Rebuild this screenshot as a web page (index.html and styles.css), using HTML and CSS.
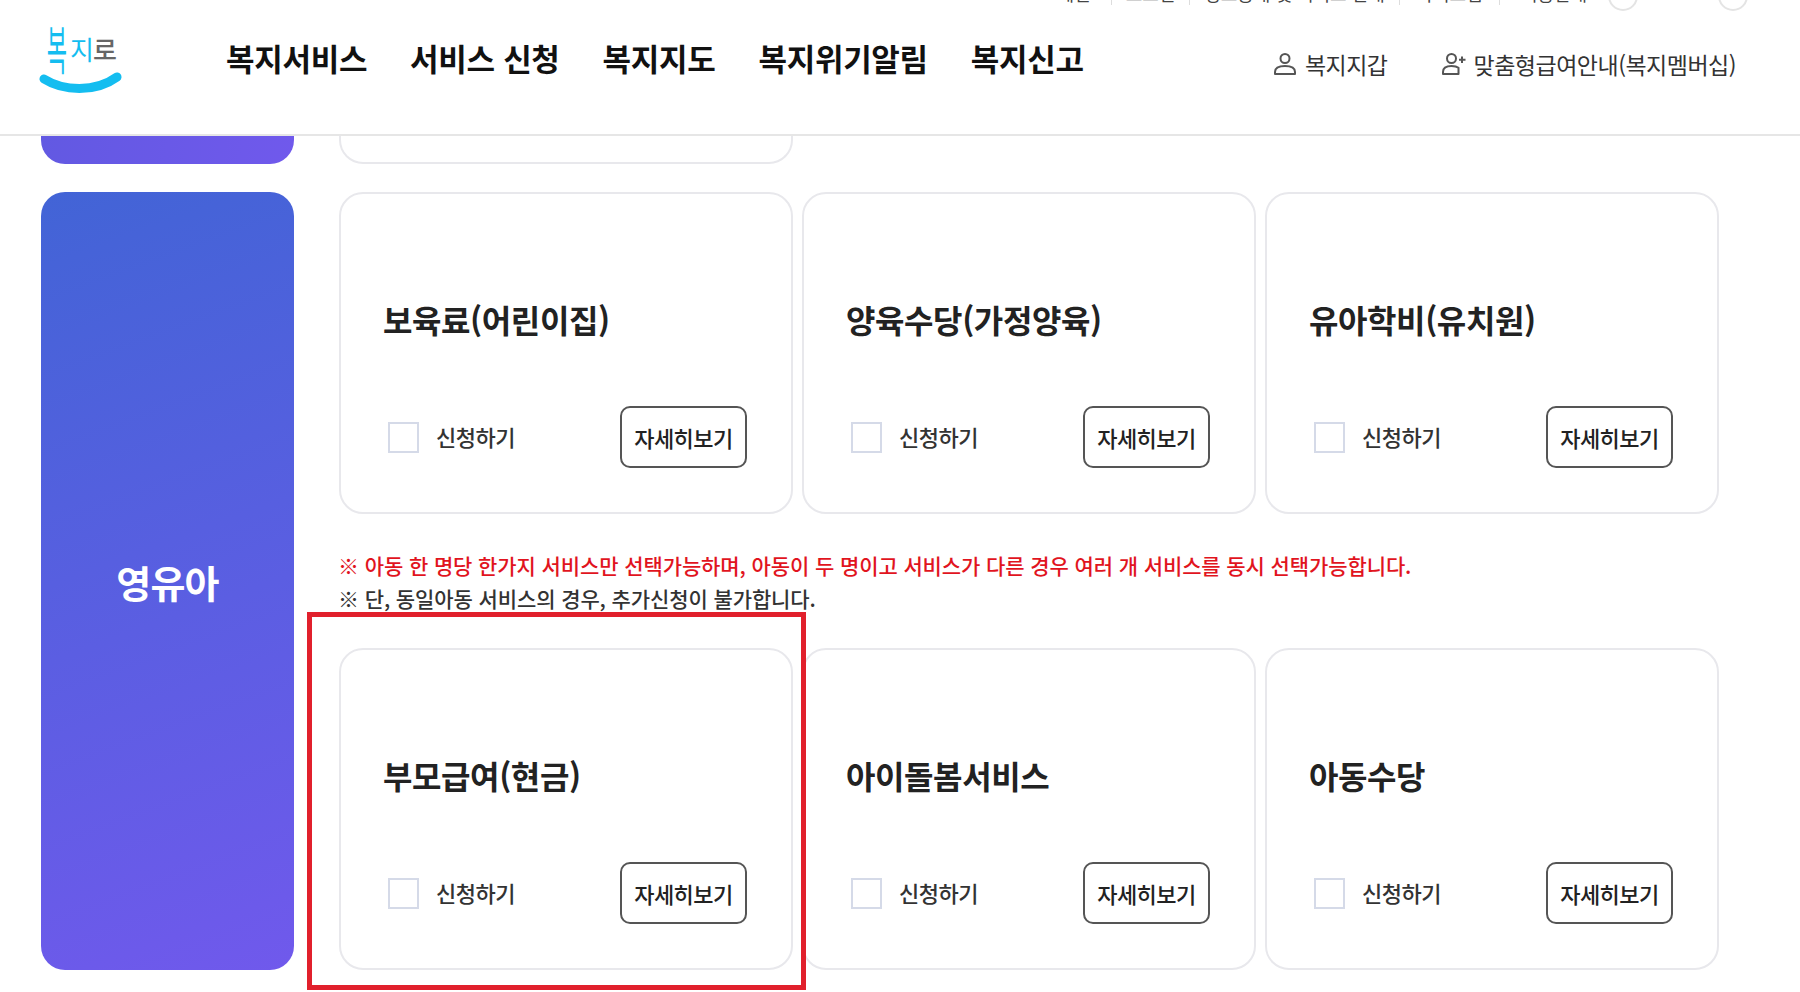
FILE: index.html
```html
<!DOCTYPE html>
<html lang="ko">

<head>
	<meta charset="utf-8">
	<title>복지로 - 서비스 신청</title>
	<link rel="stylesheet" href="styles.css">
</head>

<body>
	<header class="site_header">
		<div class="util_bar">
			<span class="util_item item_a">메인</span>
			<span class="util_item item_b">로그인</span>
			<span class="util_item item_c">정보공개 및 서비스 안내</span>
			<span class="util_item item_d">사이트맵</span>
			<span class="util_item item_e">이용안내</span>
			<span class="util_circle"></span>
			<span class="util_circle"></span>
		</div>
		<div class="main_bar">
			<a class="logo" href="#">
				<span class="logo_text"><span class="logo_bok">복</span><span class="logo_ji">지</span><span class="logo_ro">로</span></span>
				<svg class="logo_smile" viewBox="0 0 84 26" width="84" height="26">
					<path d="M5 8 C 24 20, 56 22, 78 6" fill="none" stroke="#14bdf0" stroke-width="9" stroke-linecap="round" />
				</svg>
			</a>
			<nav class="gnb">
				<a href="#">복지서비스</a>
				<a href="#">서비스 신청</a>
				<a href="#">복지지도</a>
				<a href="#">복지위기알림</a>
				<a href="#">복지신고</a>
			</nav>
			<div class="my_links">
				<a href="#">
					<svg class="my_icon" viewBox="0 0 24 24" width="24" height="24">
						<circle cx="12" cy="6.5" r="4.5" />
						<path d="M2 22 V20 C2 15.5 6 14 12 14 C18 14 22 15.5 22 20 V22 Z" />
					</svg>
					복지지갑
				</a>
				<a href="#">
					<svg class="my_icon" viewBox="0 0 24 24" width="24" height="24">
						<circle cx="9.5" cy="6.5" r="4.5" />
						<path d="M1 22 V20 C1 15.5 4.5 14 9.5 14 C12.5 14 15 14.6 16.5 15.8 V22 Z" />
						<path d="M20 4.5 V11 M17 7.8 H23.5" />
					</svg>
					맞춤형급여안내(복지멤버십)
				</a>
			</div>
		</div>
	</header>

	<main>
		<!-- previous group, scrolled under the header -->
		<section class="group group_prev">
			<div class="group_label"></div>
			<div class="card_row">
				<div class="card"></div>
			</div>
		</section>

		<section class="group">
			<div class="group_label">영유아</div>
			<div class="group_body">
				<div class="card_row">
					<div class="card">
						<h3>보육료(어린이집)</h3>
						<div class="card_foot">
							<label class="check"><span class="check_box"></span>신청하기</label>
							<a class="more_btn" href="#">자세히보기</a>
						</div>
					</div>
					<div class="card">
						<h3>양육수당(가정양육)</h3>
						<div class="card_foot">
							<label class="check"><span class="check_box"></span>신청하기</label>
							<a class="more_btn" href="#">자세히보기</a>
						</div>
					</div>
					<div class="card">
						<h3>유아학비(유치원)</h3>
						<div class="card_foot">
							<label class="check"><span class="check_box"></span>신청하기</label>
							<a class="more_btn" href="#">자세히보기</a>
						</div>
					</div>
				</div>

				<div class="notes">
					<p class="note_red">※ 아동 한 명당 한가지 서비스만 선택가능하며, 아동이 두 명이고 서비스가 다른 경우 여러 개 서비스를 동시 선택가능합니다.</p>
					<p>※ 단, 동일아동 서비스의 경우, 추가신청이 불가합니다.</p>
				</div>

				<div class="card_row">
					<div class="card card_marked">
						<h3>부모급여(현금)</h3>
						<div class="card_foot">
							<label class="check"><span class="check_box"></span>신청하기</label>
							<a class="more_btn" href="#">자세히보기</a>
						</div>
						<div class="red_mark"></div>
					</div>
					<div class="card">
						<h3>아이돌봄서비스</h3>
						<div class="card_foot">
							<label class="check"><span class="check_box"></span>신청하기</label>
							<a class="more_btn" href="#">자세히보기</a>
						</div>
					</div>
					<div class="card">
						<h3>아동수당</h3>
						<div class="card_foot">
							<label class="check"><span class="check_box"></span>신청하기</label>
							<a class="more_btn" href="#">자세히보기</a>
						</div>
					</div>
				</div>
			</div>
		</section>
	</main>
</body>

</html>
```

FILE: styles.css
```css
html, body {
	margin: 0;
	height: 992px;
	overflow: hidden;
	background-color: #FFFFFF;
}

body {
	color: #222222;
	font-family: "Noto Sans CJK KR", "Noto Sans", sans-serif;
}

a {
	color: inherit;
	text-decoration: none;
}

p, h3 {
	margin: 0;
}

/* Header */
.site_header {
	height: 134px;
	border-bottom: 2px solid #E6E6E6;
	overflow: hidden;
}

.util_bar {
	height: 26px;
	margin-top: -17px;
	padding-right: 52px;
	display: flex;
	align-items: center;
	justify-content: flex-end;
	font-size: 18px;
	color: #444444;
}

.util_item {
	box-sizing: border-box;
	margin-bottom: 6px;
	border-right: 1px solid #DDDDDD;
	line-height: 24px;
	white-space: nowrap;
	text-align: center;
}

.item_a {
	width: 75px;
}

.item_b {
	width: 78px;
}

.item_c {
	width: 210px;
}

.item_d {
	width: 100px;
}

.item_e {
	width: 108px;
	border-right: 0;
}

.util_circle {
	width: 30px;
	height: 30px;
	margin-right: 80px;
	border: 2px solid #E4E4E4;
	border-radius: 50%;
	box-sizing: border-box;
	flex: none;
}

.util_circle:last-child {
	margin-right: 0;
}

.main_bar {
	height: 125px;
	display: flex;
	align-items: flex-start;
}

.logo {
	position: relative;
	width: 84px;
	height: 88px;
	margin-left: 39px;
	display: block;
}

.logo_text {
	position: absolute;
	left: 6px;
	top: 27px;
	display: flex;
	font-size: 26px;
	line-height: 26px;
	white-space: nowrap;
}

.logo_text span {
	display: block;
	width: 23px;
}

.logo_bok {
	color: #14BDF0;
	transform: translateY(-1px) scale(.85, 2);
}

.logo_ji {
	margin-left: 2px;
	color: #14BDF0;
}

.logo_ro {
	color: #666666;
	font-weight: 500;
}

.logo_smile {
	position: absolute;
	left: 0;
	top: 62px;
}

.gnb {
	margin: 29px 0 0 103px;
	display: flex;
	gap: 43px;
	font-size: 31px;
	line-height: 40px;
	font-weight: 700;
	color: #111111;
	letter-spacing: -0.3px;
}

.my_links {
	margin: 40px 0 0 auto;
	padding-right: 64px;
	display: flex;
	gap: 54px;
	font-size: 23px;
	line-height: 30px;
	color: #333333;
	letter-spacing: -0.5px;
}

.my_links a {
	display: flex;
	align-items: center;
	gap: 8px;
}

.my_icon {
	fill: none;
	stroke: #555555;
	stroke-width: 2;
	stroke-linejoin: round;
}

/* Groups */
.group {
	margin: 28px 0 0 41px;
	width: 1678px;
	display: flex;
	gap: 45px;
}

.group_prev {
	margin-top: 0;
	height: 28px;
	overflow: hidden;
}

.group_prev .group_label {
	height: 28px;
	border-radius: 0 0 24px 24px;
	background: linear-gradient(100deg, #6259E2, #7059EC);
}

.group_prev .card_row {
	height: 28px;
}

.group_prev .card {
	height: 28px;
	box-sizing: border-box;
	border-top: 0;
	border-radius: 0 0 24px 24px;
}

.group_label {
	width: 253px;
	flex: none;
	border-radius: 24px;
	background: linear-gradient(160deg, #4264D6, #7059EC);
	color: #FFFFFF;
	font-size: 38px;
	font-weight: 700;
	letter-spacing: -0.8px;
	display: flex;
	align-items: center;
	justify-content: center;
}

.group_body {
	flex: 1;
	min-width: 0;
}

.card_row {
	display: grid;
	grid-template-columns: repeat(3, 454px);
	gap: 9px;
}

/* Cards */
.card {
	position: relative;
	height: 322px;
	box-sizing: border-box;
	padding: 0 44px 0 42px;
	border: 2px solid #E8E8EC;
	border-radius: 24px;
	background-color: #FFFFFF;
}

.card h3 {
	margin-top: 101px;
	font-size: 32px;
	line-height: 48px;
	font-weight: 700;
	color: #222222;
	letter-spacing: -0.4px;
	white-space: nowrap;
}

.card_foot {
	margin-top: 63px;
	padding-left: 5px;
	display: flex;
	align-items: center;
	justify-content: space-between;
}

.check {
	margin-bottom: 2px;
	display: flex;
	align-items: center;
	gap: 17px;
	font-size: 22px;
	font-weight: 500;
	letter-spacing: -0.5px;
	color: #333333;
}

.check_box {
	width: 31px;
	height: 31px;
	margin-top: 2px;
	box-sizing: border-box;
	border: 2px solid #D5DAE8;
	background-color: #FFFFFF;
}

.more_btn {
	width: 127px;
	height: 62px;
	box-sizing: border-box;
	border: 2px solid #555555;
	border-radius: 10px;
	font-size: 22px;
	font-weight: 500;
	letter-spacing: -0.5px;
	color: #222222;
	display: flex;
	align-items: center;
	justify-content: center;
}

.card_marked {
	z-index: 1;
}

.red_mark {
	position: absolute;
	left: -34px;
	right: -15px;
	top: -38px;
	bottom: -22px;
	border: 5px solid #E1202C;
	pointer-events: none;
}

/* Notes between the rows */
.notes {
	height: 99px;
	margin-left: -1px;
	padding-top: 35px;
	font-size: 21px;
	line-height: 33px;
	font-weight: 500;
	letter-spacing: -0.1px;
	color: #333333;
	white-space: nowrap;
}

.note_red {
	color: #E1141E;
}
```
